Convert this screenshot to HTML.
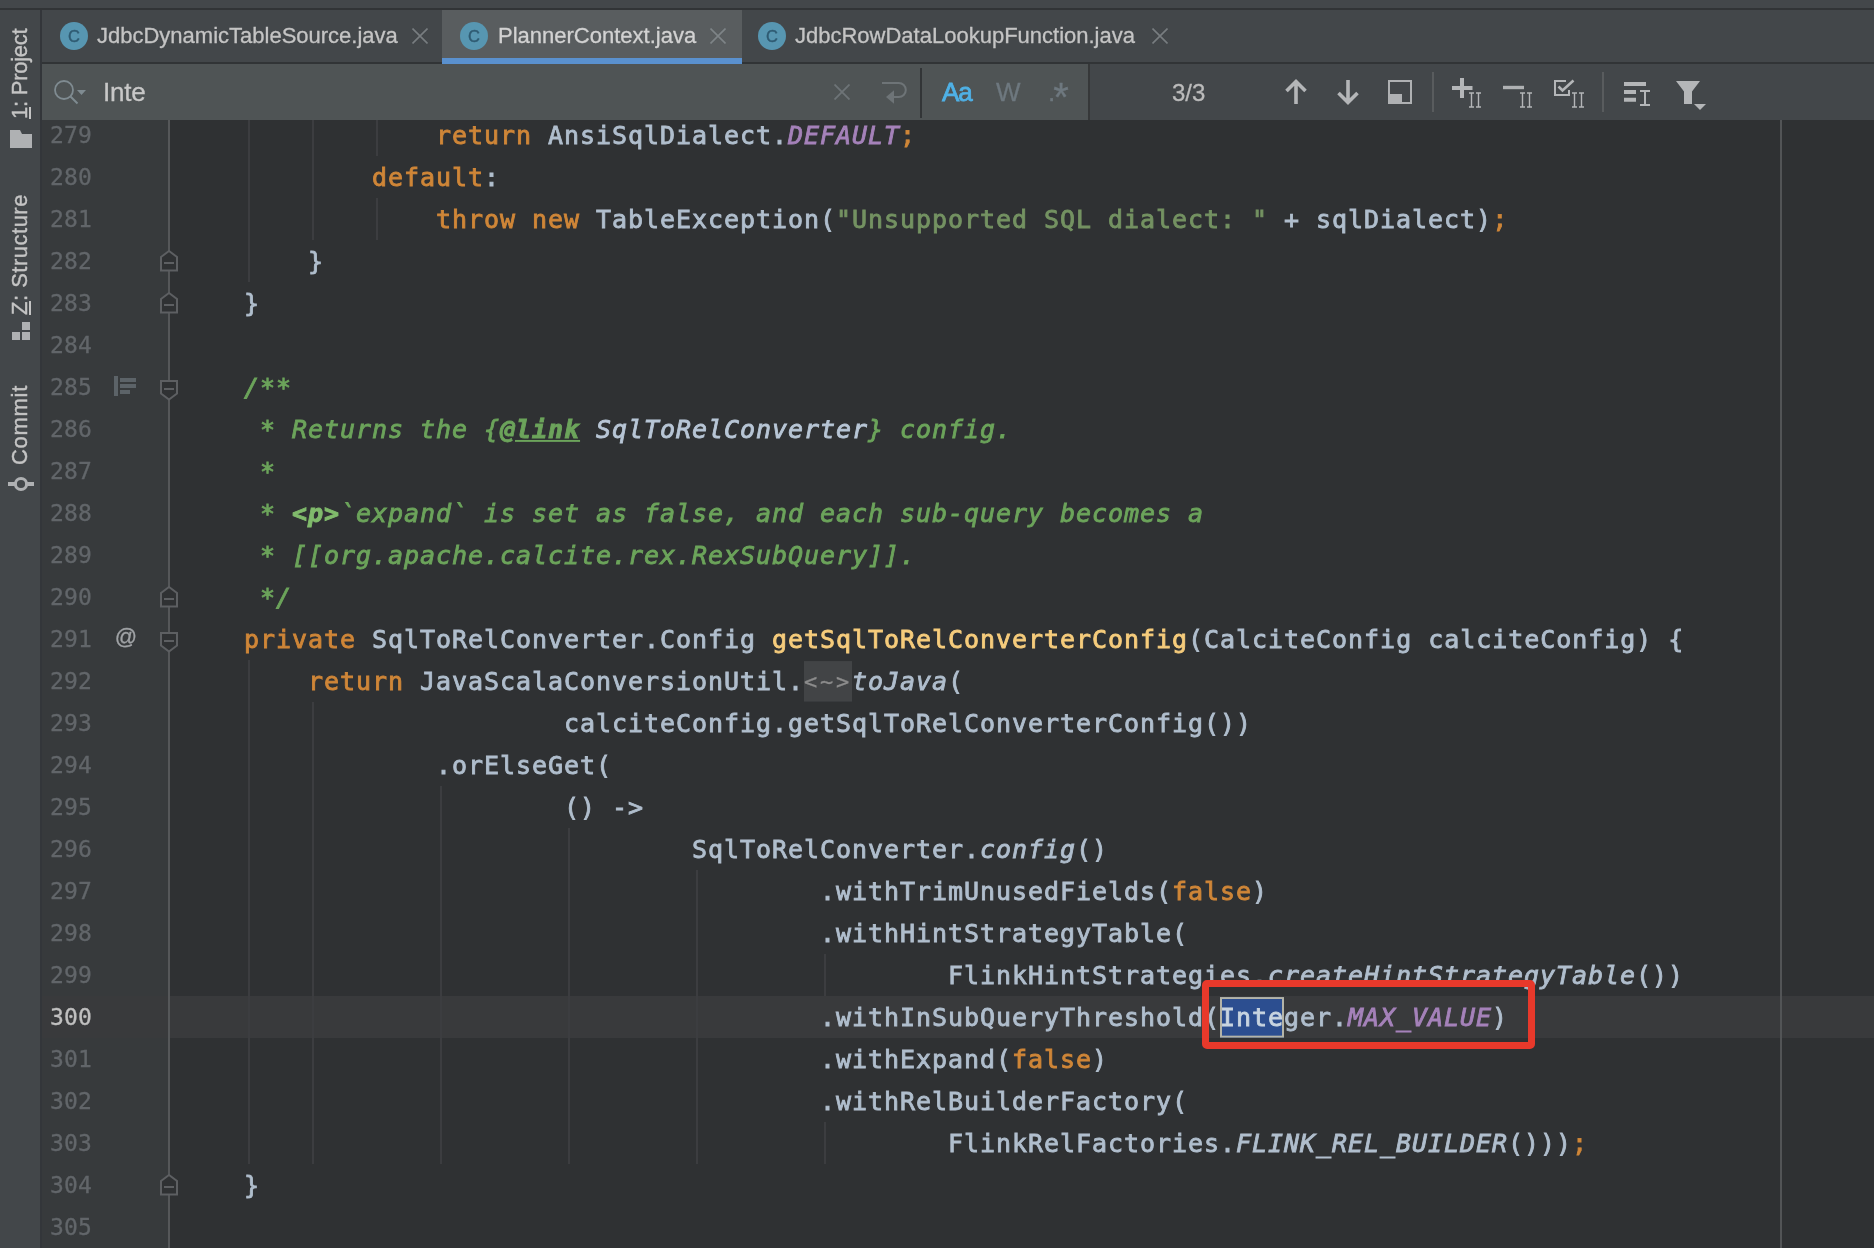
<!DOCTYPE html>
<html lang="en"><head><meta charset="utf-8"><title>PlannerContext.java</title>
<style>html,body{margin:0;padding:0}
body{width:1874px;height:1248px;overflow:hidden;background:#2f3133;position:relative;font-family:"Liberation Sans",sans-serif}
div,pre,i,span,svg{box-sizing:border-box}
#editor{position:absolute;left:0;top:0;width:1874px;height:1248px;overflow:hidden;background:#2f3133}
#gutter{position:absolute;left:41px;top:120px;width:128px;height:1128px;background:#373a3c}
#foldline{position:absolute;left:168px;top:120px;width:2px;height:1128px;background:#555759}
#margin{position:absolute;left:1780px;top:120px;width:2px;height:1128px;background:#525456}
.caretrow{position:absolute;left:41px;width:1833px;height:42px;background:#393a3c}
.g{position:absolute;width:2px;background:#3c3d40;display:block}
.ln{position:absolute;left:50px;height:42px;line-height:42px;font-family:"DejaVu Sans Mono","Liberation Mono",monospace;font-size:23px;letter-spacing:0.15px;color:#62666a;-webkit-text-stroke:0.3px currentColor}
.ln.cur{color:#c0c0c0}
.cl{position:absolute;margin:0;height:42px;line-height:42px;font-family:"DejaVu Sans Mono","Liberation Mono",monospace;font-size:25px;letter-spacing:0.95px;color:#b0becd;white-space:pre;-webkit-text-stroke:0.85px currentColor;padding-top:1px;transform:scaleY(0.965);transform-origin:0 30.5px}
.k{color:#cf8638}
.s{color:#749262}
.f{color:#a582ba;font-style:italic}
.m{color:#f6cc7c}
.i{font-style:italic}
.d{color:#6ca45b;font-style:italic}
.dt{color:#6ca45b;font-style:italic;font-weight:bold;text-decoration:underline}
.dv{color:#b8c6d6;font-style:italic}
.dh{color:#80bb6c;font-style:italic;font-weight:bold}
.fold{background:#424446;color:#8c8c8c;display:inline-block;height:42px;line-height:42px;vertical-align:top;margin-top:-1px;padding-top:1px;font-size:22px;letter-spacing:2.75px;-webkit-text-stroke:0.3px currentColor}
.sel{background:#2c4e90;outline:2px solid #b4b4a8;outline-offset:-2px;display:inline-block;height:42px;line-height:42px;vertical-align:top;margin-top:-1px;padding-top:1px;color:#c8d4e0}
.fm{position:absolute;left:159px;width:20px;height:42px;overflow:visible}
#at{position:absolute;left:114px;top:617px;width:24px;height:42px;line-height:40px;font-size:22px;color:#a0a3a6;text-align:center;-webkit-text-stroke:0.3px currentColor}
#redbox{position:absolute;left:1202px;top:980px;width:333px;height:69px;border:7px solid #e8392b;border-radius:5px}
#textlayer{position:absolute;left:0;top:0;width:1874px;height:1248px;will-change:transform}
/* chrome */
#topstrip{position:absolute;left:0;top:0;width:1874px;height:8px;background:#43474a}
#topline{position:absolute;left:0;top:8px;width:1874px;height:2px;background:#313436}
#sidebar{position:absolute;left:0;top:10px;width:40px;height:1238px;background:#43474a}
#sideline{position:absolute;left:40px;top:10px;width:2px;height:1238px;background:#33363a}
#tabs{position:absolute;left:41px;top:10px;width:1833px;height:52px;background:#43474a}
#tabline{position:absolute;left:41px;top:62px;width:1833px;height:2px;background:#313436}
#activetab{position:absolute;left:442px;top:10px;width:300px;height:54px;background:#595d5f}
#activeline{position:absolute;left:442px;top:58px;width:300px;height:6px;background:#5a91cf}
.tl{position:absolute;top:10px;height:52px;line-height:52px;font-size:22px;color:#c4c4c4;white-space:nowrap;-webkit-text-stroke:0.3px currentColor}
.ci{position:absolute;top:22px;width:28px;height:28px;border-radius:14px;background:#5796b1;text-align:center}
.ci span{display:block;font-size:16.5px;line-height:29px;color:#2f5b72;-webkit-text-stroke:0.4px currentColor}
.cx{position:absolute;top:28px;width:16px;height:16px}
#search{position:absolute;left:41px;top:64px;width:1833px;height:56px;background:#43474a}
#sfield{position:absolute;left:41px;top:64px;width:1047px;height:56px;background:#4f5455}
#stext{position:absolute;left:103px;top:64px;height:56px;line-height:57px;font-size:26px;color:#c8c8c8;-webkit-text-stroke:0.3px currentColor;letter-spacing:-0.2px}
#ssep{position:absolute;left:920px;top:68px;width:2px;height:50px;background:#323537}
#sedge{position:absolute;left:1088px;top:64px;width:2px;height:56px;background:#363839}
.sb{position:absolute;top:64px;height:56px;line-height:57px;font-size:26px;white-space:nowrap;-webkit-text-stroke:0.3px currentColor}
.tsep{position:absolute;top:72px;width:2px;height:40px;background:#595c5e}
.vt{position:absolute;left:8px;height:24px;line-height:24px;font-size:22px;color:#c4c4c4;white-space:nowrap;transform-origin:0 0;transform:rotate(-90deg);-webkit-text-stroke:0.35px currentColor}
.vt u{text-decoration-thickness:2px;text-underline-offset:2px}
.tl,#stext,.sb,.ci,#at,.vt{will-change:transform}
</style></head>
<body>
<div id="editor">
<div id="gutter"></div>
<div class="caretrow" style="top:996px"></div>
<div id="foldline"></div>
<div id="margin"></div>
<i class="g" style="left:248px;top:120px;height:162px"></i><i class="g" style="left:312px;top:120px;height:120px"></i><i class="g" style="left:376px;top:120px;height:36px"></i><i class="g" style="left:376px;top:198px;height:42px"></i><i class="g" style="left:248px;top:660px;height:504px"></i><i class="g" style="left:312px;top:702px;height:462px"></i><i class="g" style="left:440px;top:786px;height:378px"></i><i class="g" style="left:568px;top:828px;height:336px"></i><i class="g" style="left:696px;top:870px;height:294px"></i><i class="g" style="left:824px;top:954px;height:42px"></i><i class="g" style="left:824px;top:1122px;height:42px"></i>
<div id="textlayer">
<div class="ln" style="top:114px">279</div><div class="ln" style="top:156px">280</div><div class="ln" style="top:198px">281</div><div class="ln" style="top:240px">282</div><div class="ln" style="top:282px">283</div><div class="ln" style="top:324px">284</div><div class="ln" style="top:366px">285</div><div class="ln" style="top:408px">286</div><div class="ln" style="top:450px">287</div><div class="ln" style="top:492px">288</div><div class="ln" style="top:534px">289</div><div class="ln" style="top:576px">290</div><div class="ln" style="top:618px">291</div><div class="ln" style="top:660px">292</div><div class="ln" style="top:702px">293</div><div class="ln" style="top:744px">294</div><div class="ln" style="top:786px">295</div><div class="ln" style="top:828px">296</div><div class="ln" style="top:870px">297</div><div class="ln" style="top:912px">298</div><div class="ln" style="top:954px">299</div><div class="ln cur" style="top:996px">300</div><div class="ln" style="top:1038px">301</div><div class="ln" style="top:1080px">302</div><div class="ln" style="top:1122px">303</div><div class="ln" style="top:1164px">304</div><div class="ln" style="top:1206px">305</div>
<pre class="cl" style="top:114px;left:436px"><span class="k">return</span> AnsiSqlDialect.<span class="f">DEFAULT</span><span class="k">;</span></pre>
<pre class="cl" style="top:156px;left:372px"><span class="k">default</span>:</pre>
<pre class="cl" style="top:198px;left:436px"><span class="k">throw new</span> TableException(<span class="s">"Unsupported SQL dialect: "</span> + sqlDialect)<span class="k">;</span></pre>
<pre class="cl" style="top:240px;left:308px">}</pre>
<pre class="cl" style="top:282px;left:244px">}</pre>
<pre class="cl" style="top:366px;left:244px"><span class="d">/**</span></pre>
<pre class="cl" style="top:408px;left:260px"><span class="d">* Returns the {</span><span class="dt">@link</span><span class="d"> </span><span class="dv">SqlToRelConverter</span><span class="d">} config.</span></pre>
<pre class="cl" style="top:450px;left:260px"><span class="d">*</span></pre>
<pre class="cl" style="top:492px;left:260px"><span class="d">* </span><span class="dh">&lt;p&gt;</span><span class="d">`expand` is set as false, and each sub-query becomes a</span></pre>
<pre class="cl" style="top:534px;left:260px"><span class="d">* [[org.apache.calcite.rex.RexSubQuery]].</span></pre>
<pre class="cl" style="top:576px;left:260px"><span class="d">*/</span></pre>
<pre class="cl" style="top:618px;left:244px"><span class="k">private</span> SqlToRelConverter.Config <span class="m">getSqlToRelConverterConfig</span>(CalciteConfig calciteConfig) {</pre>
<pre class="cl" style="top:660px;left:308px"><span class="k">return</span> JavaScalaConversionUtil.<span class="fold">&lt;~&gt;</span><span class="i">toJava</span>(</pre>
<pre class="cl" style="top:702px;left:564px">calciteConfig.getSqlToRelConverterConfig())</pre>
<pre class="cl" style="top:744px;left:436px">.orElseGet(</pre>
<pre class="cl" style="top:786px;left:564px">() -&gt;</pre>
<pre class="cl" style="top:828px;left:692px">SqlToRelConverter.<span class="i">config</span>()</pre>
<pre class="cl" style="top:870px;left:820px">.withTrimUnusedFields(<span class="k">false</span>)</pre>
<pre class="cl" style="top:912px;left:820px">.withHintStrategyTable(</pre>
<pre class="cl" style="top:954px;left:948px">FlinkHintStrategies.<span class="i">createHintStrategyTable</span>())</pre>
<pre class="cl" style="top:996px;left:820px">.withInSubQueryThreshold(<span class="sel">Inte</span>ger.<span class="f">MAX_VALUE</span>)</pre>
<pre class="cl" style="top:1038px;left:820px">.withExpand(<span class="k">false</span>)</pre>
<pre class="cl" style="top:1080px;left:820px">.withRelBuilderFactory(</pre>
<pre class="cl" style="top:1122px;left:948px">FlinkRelFactories.<span class="i">FLINK_REL_BUILDER</span>()))<span class="k">;</span></pre>
<pre class="cl" style="top:1164px;left:244px">}</pre>
</div>
<!-- fold markers -->
<svg class="fm" style="top:240px" viewBox="0 0 20 42"><path d="M2 17L10 11L18 17V30.5H2Z" fill="#2f3133" stroke="#5d5f62" stroke-width="2"/><path d="M5 23H15" stroke="#5d5f62" stroke-width="2"/></svg>
<svg class="fm" style="top:282px" viewBox="0 0 20 42"><path d="M2 17L10 11L18 17V30.5H2Z" fill="#2f3133" stroke="#5d5f62" stroke-width="2"/><path d="M5 23H15" stroke="#5d5f62" stroke-width="2"/></svg>
<svg class="fm" style="top:576px" viewBox="0 0 20 42"><path d="M2 17L10 11L18 17V30.5H2Z" fill="#2f3133" stroke="#5d5f62" stroke-width="2"/><path d="M5 23H15" stroke="#5d5f62" stroke-width="2"/></svg>
<svg class="fm" style="top:1164px" viewBox="0 0 20 42"><path d="M2 17L10 11L18 17V30.5H2Z" fill="#2f3133" stroke="#5d5f62" stroke-width="2"/><path d="M5 23H15" stroke="#5d5f62" stroke-width="2"/></svg>
<svg class="fm" style="top:366px" viewBox="0 0 20 42"><path d="M2 15H18V27.5L10 33.5L2 27.5Z" fill="#2f3133" stroke="#5d5f62" stroke-width="2"/><path d="M5 23H15" stroke="#5d5f62" stroke-width="2"/></svg>
<svg class="fm" style="top:618px" viewBox="0 0 20 42"><path d="M2 15H18V27.5L10 33.5L2 27.5Z" fill="#2f3133" stroke="#5d5f62" stroke-width="2"/><path d="M5 23H15" stroke="#5d5f62" stroke-width="2"/></svg>
<!-- gutter icons -->
<svg style="position:absolute;left:114px;top:376px;width:22px;height:20px" viewBox="0 0 22 20"><path d="M2 0V20" stroke="#5c6368" stroke-width="4"/><path d="M6 4H22M6 10H22M6 16H16" stroke="#5c6368" stroke-width="4"/></svg>
<div id="at">@</div>
<div id="redbox"></div>
</div>
<div id="topstrip"></div><div id="topline"></div>
<div id="sidebar"></div>
<div id="tabs"></div><div id="tabline"></div>
<div id="activetab"></div><div id="activeline"></div>

<!-- editor tabs -->
<div class="ci" style="left:60px"><span>C</span></div>
<div class="tl" style="left:97px">JdbcDynamicTableSource.java</div>
<svg class="cx" style="left:412px" viewBox="0 0 16 16"><path d="M0.5 0.5L15.5 15.5M15.5 0.5L0.5 15.5" stroke="#787d80" stroke-width="1.6" fill="none"/></svg>

<div class="ci" style="left:460px"><span>C</span></div>
<div class="tl" style="left:498px;color:#d2d2d2">PlannerContext.java</div>
<svg class="cx" style="left:710px" viewBox="0 0 16 16"><path d="M0.5 0.5L15.5 15.5M15.5 0.5L0.5 15.5" stroke="#7e8487" stroke-width="1.6" fill="none"/></svg>

<div class="ci" style="left:758px"><span>C</span></div>
<div class="tl" style="left:795px">JdbcRowDataLookupFunction.java</div>
<svg class="cx" style="left:1152px" viewBox="0 0 16 16"><path d="M0.5 0.5L15.5 15.5M15.5 0.5L0.5 15.5" stroke="#787d80" stroke-width="1.6" fill="none"/></svg>

<!-- search bar -->
<div id="search"></div><div id="sfield"></div>
<svg style="position:absolute;left:50px;top:76px;width:40px;height:32px" viewBox="0 0 40 32">
  <circle cx="14" cy="14" r="9" fill="none" stroke="#7f8b91" stroke-width="1.8"/>
  <path d="M20.5 20.5L27.5 27.5" stroke="#7f8b91" stroke-width="2" fill="none"/>
  <path d="M27 14H36L31.5 19Z" fill="#7f8b91"/>
</svg>
<div id="stext">Inte</div>
<svg style="position:absolute;left:834px;top:84px;width:16px;height:16px" viewBox="0 0 16 16"><path d="M0.5 0.5L15.5 15.5M15.5 0.5L0.5 15.5" stroke="#6e7477" stroke-width="1.8" fill="none"/></svg>
<svg style="position:absolute;left:880px;top:80px;width:28px;height:26px" viewBox="0 0 28 26"><path d="M2 3H18.8A7 7 0 0 1 18.8 17H13" stroke="#6e7477" stroke-width="2" fill="none"/><path d="M14 10.3L6 17L14 23.7Z" fill="#6e7477"/></svg>
<div id="ssep"></div>
<div class="sb" style="left:942px;color:#4fb1e6;-webkit-text-stroke:0.8px #4fb1e6;letter-spacing:-1px">Aa</div>
<div class="sb" style="left:996px;color:#6e787f">W</div>
<div class="sb" style="left:1048px;color:#6e787f;letter-spacing:-2px">.<span style="font-size:40px;line-height:20px;position:relative;top:10px">*</span></div>
<div id="sedge"></div>
<div class="sb" style="left:1172px;color:#bbbbbb;font-size:24px">3/3</div>

<!-- toolbar icons -->
<svg style="position:absolute;left:1283px;top:78px;width:26px;height:28px" viewBox="0 0 26 28"><path d="M13 26V4M3.5 13L13 3.5L22.5 13" stroke="#b4b6b8" stroke-width="3.6" fill="none"/></svg>
<svg style="position:absolute;left:1335px;top:78px;width:26px;height:28px" viewBox="0 0 26 28"><path d="M13 2V24M3.5 15L13 24.5L22.5 15" stroke="#b4b6b8" stroke-width="3.6" fill="none"/></svg>
<svg style="position:absolute;left:1387px;top:79px;width:26px;height:26px" viewBox="0 0 26 26"><rect x="2" y="2" width="22" height="22" fill="none" stroke="#afb1b3" stroke-width="2"/><rect x="2" y="15" width="13" height="9" fill="#afb1b3"/></svg>
<div class="tsep" style="left:1432px"></div>
<svg style="position:absolute;left:1451px;top:78px;width:34px;height:32px" viewBox="0 0 34 32"><path d="M11 0V20M1 10H21.5" stroke="#b4b6b8" stroke-width="4" fill="none"/><path d="M18 15H23M25 15H30M18 29H23M25 29H30M20.5 15V29M27.5 15V29" stroke="#b4b6b8" stroke-width="1.4" fill="none"/></svg>
<svg style="position:absolute;left:1502px;top:78px;width:34px;height:32px" viewBox="0 0 34 32"><path d="M1 9.5H22" stroke="#afb1b3" stroke-width="3.4" fill="none"/><path d="M18 15H23M25 15H30M18 29H23M25 29H30M20.5 15V29M27.5 15V29" stroke="#b4b6b8" stroke-width="1.4" fill="none"/></svg>
<svg style="position:absolute;left:1552px;top:78px;width:36px;height:32px" viewBox="0 0 36 32"><path d="M14 3H3V17H17V12" stroke="#b4b6b8" stroke-width="2" fill="none"/><path d="M6.5 8.5L10.5 12.5L21.5 2.5" stroke="#b4b6b8" stroke-width="2.6" fill="none"/><path d="M20 15H25M27 15H32M20 29H25M27 29H32M22.5 15V29M29.5 15V29" stroke="#b4b6b8" stroke-width="1.4" fill="none"/></svg>
<div class="tsep" style="left:1602px"></div>
<svg style="position:absolute;left:1622px;top:80px;width:30px;height:28px" viewBox="0 0 30 28"><path d="M2 4H24M2 12H14M2 19.7H14" stroke="#b4b6b8" stroke-width="4" fill="none"/><path d="M18 11H28M18 25H28M23 11V25" stroke="#b4b6b8" stroke-width="2" fill="none"/></svg>
<svg style="position:absolute;left:1675px;top:79px;width:34px;height:32px" viewBox="0 0 34 32"><path d="M1 2H25L17 12.5V25H9V12.5Z" fill="#b4b6b8"/><path d="M19 25H31L25 31Z" fill="#b4b6b8"/></svg>

<!-- left tool window stripe -->
<div class="vt" style="top:119px;letter-spacing:-0.25px"><u>1</u>: Project</div>
<svg style="position:absolute;left:10px;top:130px;width:22px;height:18px" viewBox="0 0 22 18"><path d="M0 0H10L12 4H22V18H0Z" fill="#afb1b3"/></svg>
<div class="vt" style="top:315px;letter-spacing:0.5px"><u>Z</u>: Structure</div>
<svg style="position:absolute;left:12px;top:322px;width:18px;height:18px" viewBox="0 0 18 18"><path d="M10 0H18V8H10ZM0 10H8V18H0ZM10 10H18V18H10Z" fill="#afb1b3"/></svg>
<div class="vt" style="top:465px;letter-spacing:0.7px">Commit</div>
<svg style="position:absolute;left:7px;top:476px;width:28px;height:16px" viewBox="0 0 28 16"><path d="M1 8H27" stroke="#afb1b3" stroke-width="4"/><circle cx="14" cy="8" r="5.6" fill="#43474a" stroke="#afb1b3" stroke-width="3"/></svg>
<div id="sideline"></div>
</body></html>
